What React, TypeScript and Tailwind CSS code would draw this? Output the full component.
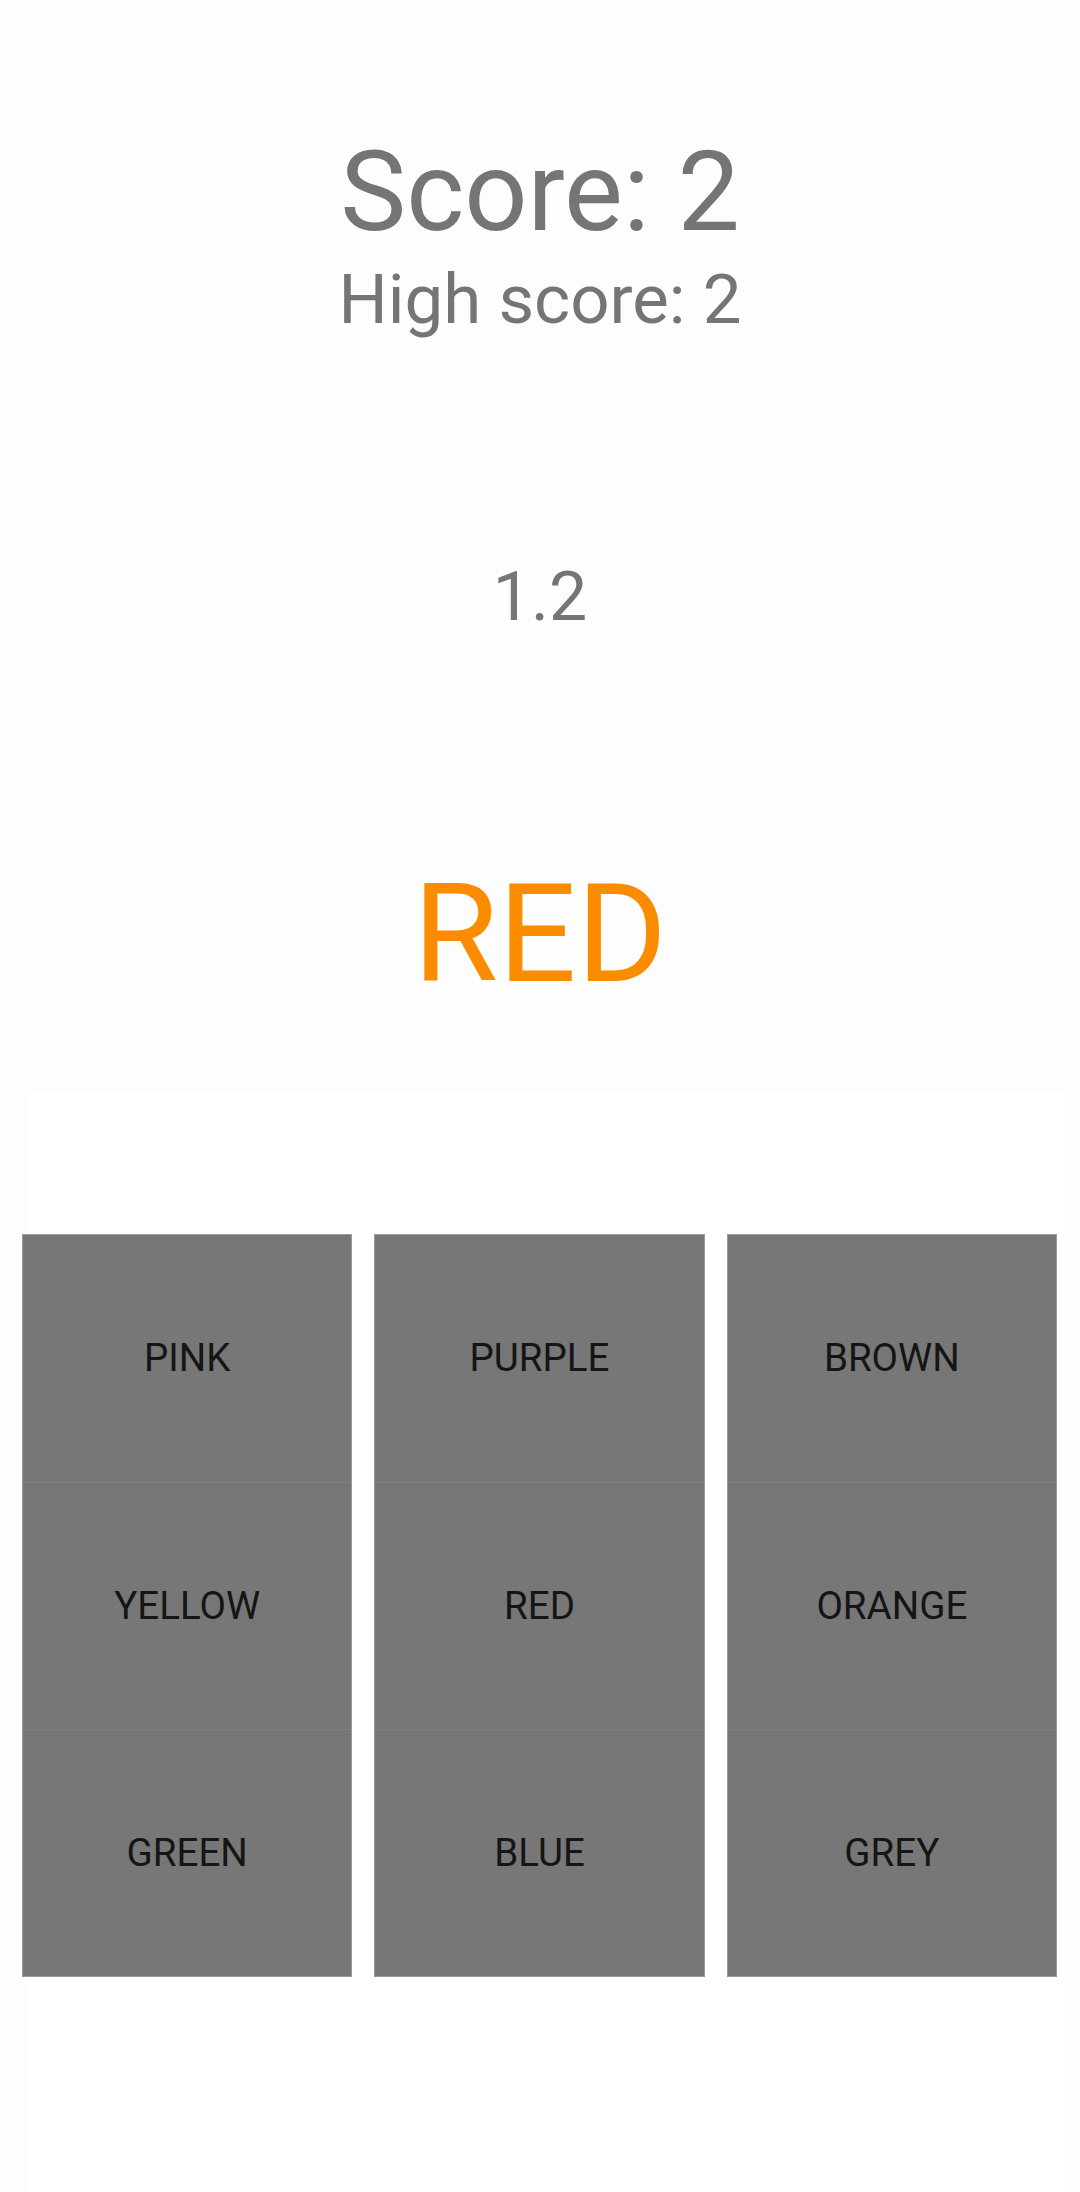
import React from "react";

const rows = [
  ["PINK", "PURPLE", "BROWN"],
  ["YELLOW", "RED", "ORANGE"],
  ["GREEN", "BLUE", "GREY"],
];

export default function App() {
  return (
    <div
      className="flex min-h-[2192px] w-[1080px] flex-col bg-[#fdfdfd]"
      style={{ fontFamily: "Roboto, 'Noto Sans', sans-serif" }}
    >
      <div className="flex flex-col items-center">
        <div className="mt-[137px] text-[111px] leading-none text-[#757575]">Score: 2</div>
        <div className="mt-[17px] text-[69px] leading-none text-[#757575]">High score: 2</div>
        <div className="mt-[229px] text-[68px] leading-none text-[#757575]">1.2</div>
        <div className="mt-[234px] text-[138px] leading-none text-[#fb8c00]">RED</div>
      </div>
      <div className="ml-[27px] mr-[16px] mt-[89px] flex flex-1 flex-col bg-white pt-[142px]">
        <div className="-ml-[5px] mr-[7px] grid grid-cols-3 gap-x-[22px]">
          {[0, 1, 2].map((c) => (
            <div key={c} className="flex flex-col border border-[#9a9a9a] bg-[#777777]">
              {rows.map((r, i) => (
                <div
                  key={i}
                  className={
                    "flex h-[247px] items-center justify-center text-[38.5px] leading-none text-[#151515] " +
                    (i > 0 ? "border-t border-[#808080]" : "")
                  }
                >
                  {r[c]}
                </div>
              ))}
            </div>
          ))}
        </div>
      </div>
    </div>
  );
}
